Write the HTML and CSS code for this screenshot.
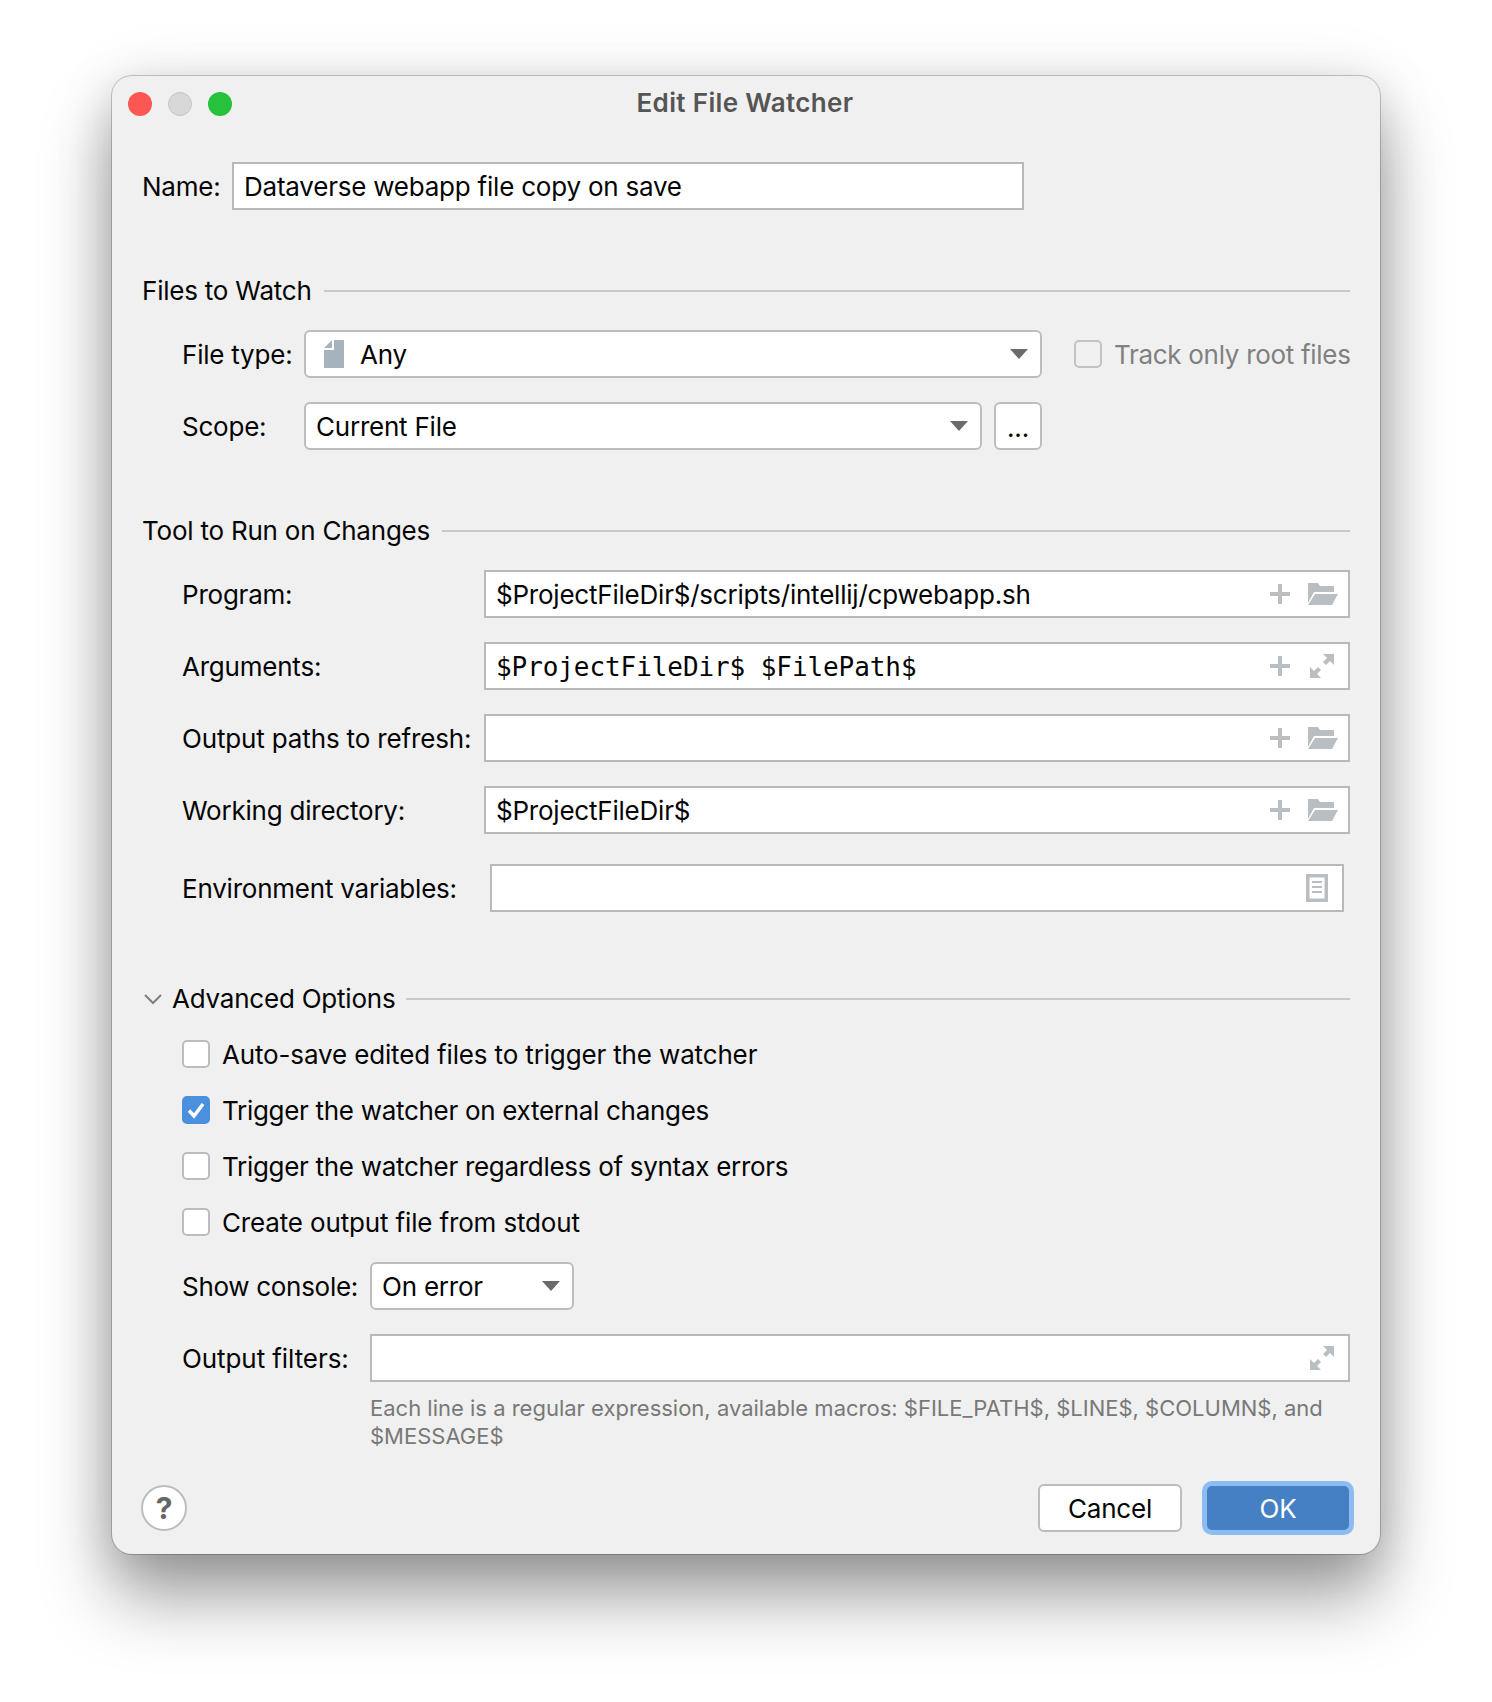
FILE: index.html
```html
<!DOCTYPE html>
<html lang="en">
<head>
<meta charset="utf-8">
<title>Edit File Watcher</title>
<link rel="stylesheet" href="styles.css">
</head>
<body>
<div class="window">
  <header class="titlebar">
    <div class="lights"><span class="light red"></span><span class="light grey"></span><span class="light green"></span></div>
    <div class="title">Edit File Watcher</div>
    <div></div>
  </header>

  <div class="row name-row">
    <label class="lbl">Name:</label>
    <div class="field name-field">Dataverse webapp file copy on save</div>
  </div>

  <div class="group files-group"><span>Files to Watch</span><i class="rule"></i></div>
  <div class="row filetype-row indent">
    <label class="lbl w-type">File type:</label>
    <div class="combo filetype-combo">
      <svg class="file-icon" width="20" height="28" viewBox="0 0 20 28"><path d="M10 0H20V28H0V10H10Z M0 8L8 0V8Z" fill="#a7b3bc"/></svg>
      <span class="combo-text">Any</span>
      <svg class="arrow" width="18" height="10" viewBox="0 0 18 10"><path d="M0 0H18L9 10Z" fill="#6b6b6b"/></svg>
    </div>
    <div class="track"><span class="check disabled"></span><span>Track only root files</span></div>
  </div>
  <div class="row scope-row indent">
    <label class="lbl w-type">Scope:</label>
    <div class="combo scope-combo">
      <span>Current File</span>
      <svg class="arrow" width="18" height="10" viewBox="0 0 18 10"><path d="M0 0H18L9 10Z" fill="#6b6b6b"/></svg>
    </div>
    <div class="dots">...</div>
  </div>

  <div class="group tool-group"><span>Tool to Run on Changes</span><i class="rule"></i></div>
  <div class="row tool-row indent">
    <label class="lbl w-tool">Program:</label>
    <div class="field grow"><span class="grow">$ProjectFileDir$/scripts/intellij/cpwebapp.sh</span>
      <svg class="plus" width="20" height="20" viewBox="0 0 20 20"><path d="M8 0h4v8h8v4h-8v8H8v-8H0V8h8z" fill="#b9bec2"/></svg>
      <svg class="folder" width="30" height="22" viewBox="0 0 30 22"><path d="M0 0h10l2 3h14v6H6L0 20zM7 11h23l-6 11H0z" fill="#b9bec2"/></svg>
    </div>
  </div>
  <div class="row tool-row indent">
    <label class="lbl w-tool">Arguments:</label>
    <div class="field grow"><span class="grow mono">$ProjectFileDir$ $FilePath$</span>
      <svg class="plus" width="20" height="20" viewBox="0 0 20 20"><path d="M8 0h4v8h8v4h-8v8H8v-8H0V8h8z" fill="#b9bec2"/></svg>
      <svg class="expand" width="24" height="24" viewBox="0 0 24 24"><path d="M13 0h11v11l-4-4-4 4-3-3 4-4zM0 24V13l4 4 4-4 3 3-4 4 4 4z" fill="#b9bec2"/></svg>
    </div>
  </div>
  <div class="row tool-row indent">
    <label class="lbl w-tool loose">Output paths to refresh:</label>
    <div class="field grow"><span class="grow"></span>
      <svg class="plus" width="20" height="20" viewBox="0 0 20 20"><path d="M8 0h4v8h8v4h-8v8H8v-8H0V8h8z" fill="#b9bec2"/></svg>
      <svg class="folder" width="30" height="22" viewBox="0 0 30 22"><path d="M0 0h10l2 3h14v6H6L0 20zM7 11h23l-6 11H0z" fill="#b9bec2"/></svg>
    </div>
  </div>
  <div class="row tool-row indent">
    <label class="lbl w-tool">Working directory:</label>
    <div class="field grow"><span class="grow">$ProjectFileDir$</span>
      <svg class="plus" width="20" height="20" viewBox="0 0 20 20"><path d="M8 0h4v8h8v4h-8v8H8v-8H0V8h8z" fill="#b9bec2"/></svg>
      <svg class="folder" width="30" height="22" viewBox="0 0 30 22"><path d="M0 0h10l2 3h14v6H6L0 20zM7 11h23l-6 11H0z" fill="#b9bec2"/></svg>
    </div>
  </div>
  <div class="row env-row indent">
    <label class="lbl w-env">Environment variables:</label>
    <div class="field grow"><span class="grow"></span>
      <svg class="doc" width="22" height="28" viewBox="0 0 22 28"><path fill-rule="evenodd" d="M0 0h22v28H0zM3.500 3.500v21h15v-21z" fill="#b9bec2"/><path d="M6 7h10v2H6zM6 12h10v2H6zM6 17h10v2H6z" fill="#b9bec2"/></svg>
    </div>
  </div>

  <div class="group adv-group">
    <svg class="chev" width="18" height="11" viewBox="0 0 18 11"><path d="M1 1l8 8 8-8" fill="none" stroke="#7f7f7f" stroke-width="2"/></svg>
    <span>Advanced Options</span><i class="rule"></i>
  </div>
  <div class="checks indent">
    <div class="check-row"><span class="check"></span><span class="loose">Auto-save edited files to trigger the watcher</span></div>
    <div class="check-row"><span class="check on"><svg width="28" height="28" viewBox="0 0 28 28"><path d="M7 14.500l5 5.500 9-12" fill="none" stroke="#fff" stroke-width="3.400"/></svg></span><span class="tight">Trigger the watcher on external changes</span></div>
    <div class="check-row"><span class="check"></span><span class="tight">Trigger the watcher regardless of syntax errors</span></div>
    <div class="check-row"><span class="check"></span><span class="loose">Create output file from stdout</span></div>
  </div>
  <div class="row console-row indent">
    <label class="lbl w-con tight">Show console:</label>
    <div class="combo console-combo">
      <span>On error</span>
      <svg class="arrow" width="18" height="10" viewBox="0 0 18 10"><path d="M0 0H18L9 10Z" fill="#6b6b6b"/></svg>
    </div>
  </div>
  <div class="row filters-row indent">
    <label class="lbl w-con looser">Output filters:</label>
    <div class="field grow"><span class="grow"></span>
      <svg class="expand" width="24" height="24" viewBox="0 0 24 24"><path d="M13 0h11v11l-4-4-4 4-3-3 4-4zM0 24V13l4 4 4-4 3 3-4 4 4 4z" fill="#b9bec2"/></svg>
    </div>
  </div>
  <p class="hint">Each line is a regular expression, available macros: $FILE_PATH$, $LINE$, $COLUMN$, and $MESSAGE$</p>

  <footer class="footer">
    <div class="help">?</div>
    <div class="btn cancel">Cancel</div>
    <div class="btn ok">OK</div>
  </footer>
</div>
</body>
</html>
```

FILE: styles.css
```css
* { box-sizing: border-box; }
html, body { margin: 0; padding: 0; background: #fff; }
body {
  width: 1492px;
  height: 1702px;
  padding: 76px 0 0 112px;
  overflow: hidden;
  font-family: Inter, "Liberation Sans", sans-serif;
  font-size: 26px;
  letter-spacing: -.22px;
  color: #050505;
}
.tight { letter-spacing: -.3px; }
.loose { letter-spacing: -.15px; }
.looser { letter-spacing: -.08px; }
.window {
  width: 1268px;
  height: 1478px;
  padding: 0 30px;
  background: #f0f0f0;
  border-radius: 20px;
  box-shadow: 0 0 0 1px rgba(0,0,0,.2), 0 44px 70px rgba(0,0,0,.36), 0 10px 40px rgba(0,0,0,.1), 0 0 70px rgba(0,0,0,.07);
  display: flex;
  flex-direction: column;
}
.titlebar {
  display: grid;
  grid-template-columns: 1fr auto 1fr;
  align-items: center;
  height: 56px;
  margin: 0 -14px 30px;
}
.lights { display: flex; gap: 16px; }
.light { width: 24px; height: 24px; border-radius: 50%; }
.red { background: #fc5753; }
.grey { background: #d8d8d8; border: 1px solid #c4c4c4; }
.green { background: #27c23b; }
.title { font-weight: 600; color: #555; letter-spacing: .35px; padding: 0 2px 3px 0; }
.row { display: flex; align-items: center; height: 48px; }
.grow { flex: 1; min-width: 0; }
.indent { margin-left: 40px; }
.lbl { flex: none; white-space: nowrap; padding-top: 1px; }
.field {
  display: flex;
  align-items: center;
  height: 48px;
  padding: 0 10px;
  background: #fff;
  border: 2px solid #b9b9b9;
  white-space: nowrap;
}
.name-row .lbl { width: 90px; }
.name-field { width: 792px; }
.group { display: flex; align-items: center; gap: 12px; height: 32px; }
.group span { margin-top: -2px; }
.rule { flex: 1; height: 2px; background: #c8c8c8; }
.files-group { margin-top: 65px; }
.filetype-row { margin-top: 23px; }
.w-type { width: 122px; }
.combo {
  display: flex;
  align-items: center;
  height: 48px;
  padding: 0 12px 0 10px;
  background: #fff;
  border: 2px solid #bdbdbd;
  border-radius: 6px;
}
.filetype-combo { flex: none; width: 738px; }
.file-icon { flex: none; margin: 0 16px 0 8px; }
.combo-text { flex: 1; }
.combo > span:first-of-type { flex: 1; }
.arrow { flex: none; }
.track { flex: none; display: flex; align-items: center; gap: 12px; margin-left: 32px; color: #808080; white-space: nowrap; letter-spacing: -.3px; }
.check {
  display: block;
  flex: none;
  width: 28px;
  height: 28px;
  background: #fff;
  border: 2px solid #bdbdbd;
  border-radius: 5px;
}
.check.disabled { background: #f0f0f0; border-color: #c2c2c2; }
.check.on { background: #4a90dc; border: 0; }
.check.on svg { display: block; }
.scope-row { margin-top: 24px; }
.scope-combo { width: 678px; }
.dots {
  width: 48px;
  height: 48px;
  margin-left: 12px;
  background: #fff;
  border: 2px solid #bdbdbd;
  border-radius: 6px;
  text-align: center;
  line-height: 48px;
}
.tool-group { margin-top: 65px; }
.tool-row { margin-top: 24px; }
.tool-group + .tool-row { margin-top: 23px; }
.w-tool { width: 302px; }
.plus { flex: none; margin-right: 18px; }
.folder { flex: none; }
.expand { flex: none; margin: 0 4px 0 2px; }
.mono { font-family: "DejaVu Sans Mono", "Liberation Mono", monospace; letter-spacing: -.08px; padding-top: 2px; }
.env-row { margin-top: 30px; margin-right: 6px; }
.w-env { width: 308px; }
.doc { flex: none; margin-right: 4px; }
.adv-group { margin-top: 71px; gap: 11px; }
.chev { flex: none; margin: 0 -1px 0 2px; }
.checks { display: flex; flex-direction: column; gap: 28px; margin-top: 25px; }
.check-row { display: flex; align-items: center; gap: 12px; height: 28px; white-space: nowrap; }
.console-row { margin-top: 26px; }
.w-con { width: 188px; }
.console-combo { width: 204px; }
.filters-row { margin-top: 24px; }
.hint {
  margin: 12px 0 0 228px;
  font-size: 22px;
  line-height: 28px;
  letter-spacing: 0;
  color: #787878;
}
.footer { display: flex; align-items: center; margin-top: auto; margin-bottom: 22px; }
.help {
  width: 46px;
  height: 46px;
  margin: 0 auto 0 -1px;
  background: #fff;
  border: 2px solid #bdbdbd;
  border-radius: 50%;
  color: #666;
  font-weight: 700;
  font-size: 30px;
  text-align: center;
  line-height: 42px;
}
.btn { text-align: center; }
.cancel {
  width: 144px;
  height: 48px;
  background: #fff;
  border: 2px solid #bdbdbd;
  border-radius: 6px;
  line-height: 46px;
}
.ok {
  width: 142px;
  height: 44px;
  margin: 0 1px 0 25px;
  background: #4680c4;
  border-radius: 5px;
  color: #fff;
  line-height: 46px;
  box-shadow: 0 0 0 5px #8dbcf2;
}
```
